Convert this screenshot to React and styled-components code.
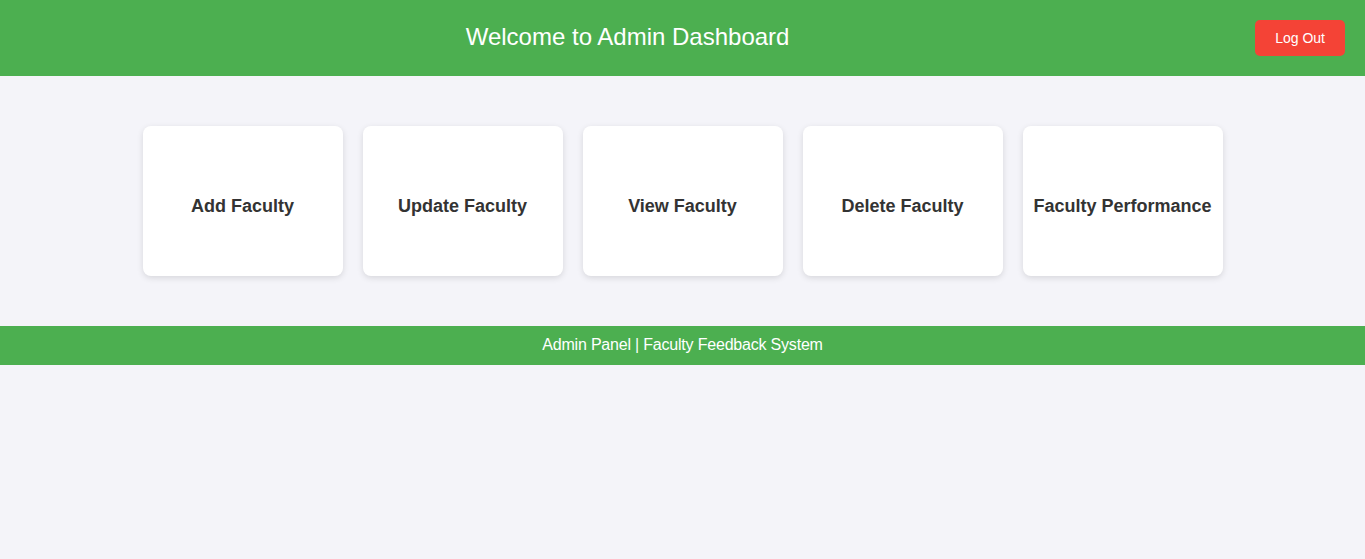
import { createGlobalStyle, styled } from 'styled-components';

const GlobalStyle = createGlobalStyle`
  body {
    margin: 0;
    background-color: #f4f4f9;
    font-family: "Liberation Sans", Arial, sans-serif;
  }
`

const Header = styled.header`
  display: flex;
  align-items: center;
  height: 76px;
  padding: 0 20px;
  background-color: #4caf50;
  color: #fff;
  h1 {
    flex: 1;
    margin: 0 0 2px;
    text-align: center;
    font-size: 24px;
    font-weight: normal;
  }
`

const LogoutButton = styled.button`
  margin-left: 20px;
  padding: 10px 20px;
  border: none;
  border-radius: 5px;
  background-color: #f44336;
  color: #fff;
  font-family: inherit;
  font-size: 14px;
  cursor: pointer;
`

const Main = styled.main`
  display: flex;
  justify-content: center;
  gap: 20px;
  padding: 50px 0;
`

const Card = styled.div`
  display: flex;
  align-items: center;
  justify-content: center;
  width: 200px;
  height: 150px;
  background-color: #fff;
  border-radius: 8px;
  box-shadow: 0 2px 6px rgba(0, 0, 0, 0.12);
  h3 {
    margin: 10px 0 0;
    font-size: 18px;
    font-weight: bold;
    color: #333;
    text-align: center;
  }
`

const Footer = styled.footer`
  padding: 10px 0 11px;
  background-color: #4caf50;
  color: #fff;
  text-align: center;
  font-size: 16px;
  letter-spacing: -0.2px;
`

const cards = ['Add Faculty', 'Update Faculty', 'View Faculty', 'Delete Faculty', 'Faculty Performance'];

const App = () => {
  return (
    <>
      <GlobalStyle />
      <Header>
        <h1>Welcome to Admin Dashboard</h1>
        <LogoutButton>Log Out</LogoutButton>
      </Header>
      <Main>
        {cards.map(title => (
          <Card key={title}><h3>{title}</h3></Card>
        ))}
      </Main>
      <Footer>Admin Panel | Faculty Feedback System</Footer>
    </>
  )
}

export default App;
